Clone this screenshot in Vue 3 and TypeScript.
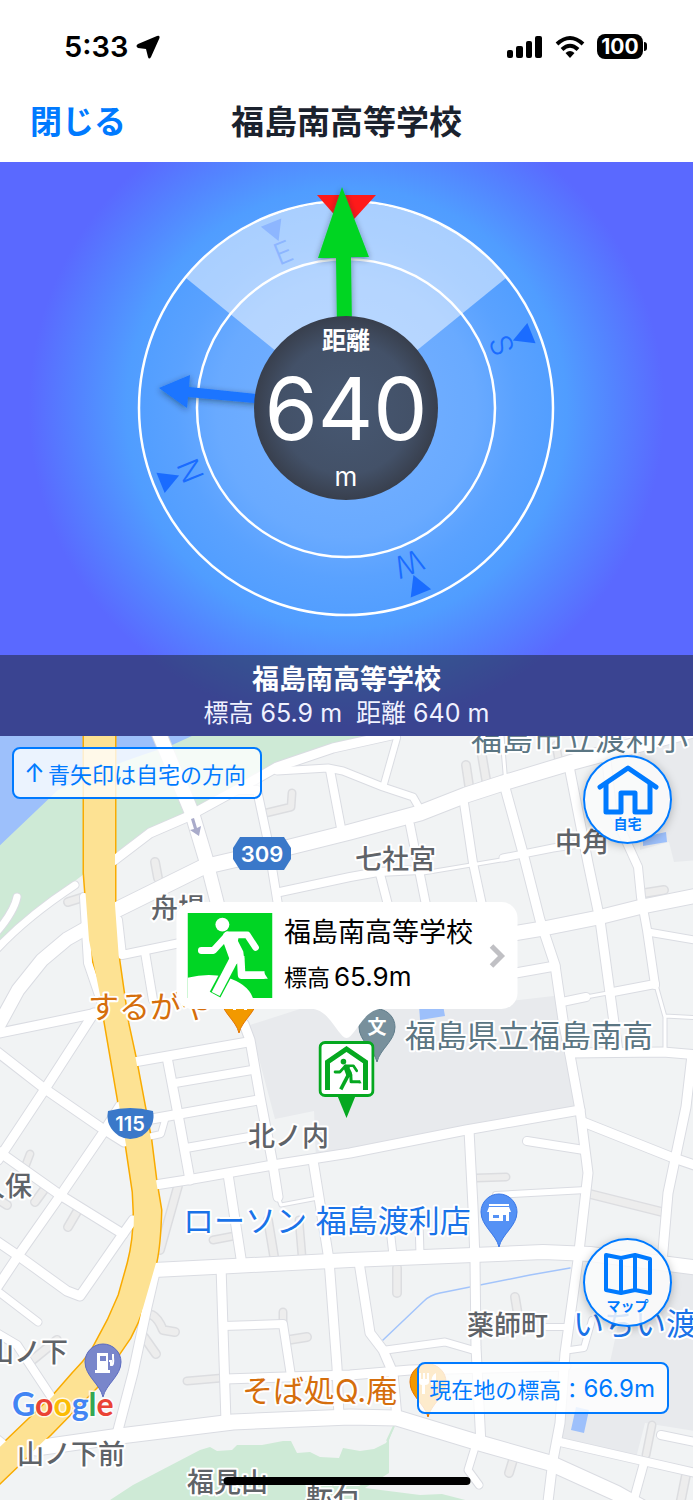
<script setup lang="ts">
interface Road { w: number; d: string }
interface Label { x: number; y: number; text: string; kind: 'town' | 'school' | 'food' | 'shop' }
interface Pin { x: number; y: number; fill: string; edge: string; icon: 'school' | 'shop' | 'fuel' | 'food' }

const compassPoints = [
  { letter: 'E', angle: -22 },
  { letter: 'S', angle: 68 },
  { letter: 'W', angle: 158 },
  { letter: 'N', angle: 248 },
]

const lanes: Road[] = [
  { w: 8, d: 'M155 862L158 878' },
  { w: 8, d: 'M68 902L84 897' },
  { w: 7, d: 'M266 813L291 807L292 793' },
  { w: 8, d: 'M466 765L470 792' },
  { w: 8, d: 'M481 750L487 785' },
  { w: 7, d: 'M556 745L559 762' },
  { w: 8, d: 'M645 893L664 890' },
  { w: 7, d: 'M30 1154L25 1167' },
  { w: 8, d: 'M46 1187L35 1202' },
  { w: 8, d: 'M-4 1198L7 1205' },
  { w: 8, d: 'M78 1210L68 1227' },
  { w: 8, d: 'M178 1186L160 1250' },
  { w: 7, d: 'M213 1240L234 1236' },
  { w: 8, d: 'M268 1220L274 1256' },
  { w: 7, d: 'M299 1220L302 1256' },
  { w: 7, d: 'M476 1178L506 1177' },
  { w: 8, d: 'M590 1194L662 1212' },
  { w: 8, d: 'M152 1315Q158 1318 163 1330L175 1332' },
  { w: 8, d: 'M144 1337L156 1354' },
  { w: 8, d: 'M57 1340L30 1362' },
  { w: 7, d: 'M283 1312L283 1324' },
  { w: 8, d: 'M288 1340L307 1337' },
  { w: 7, d: 'M187 1381L222 1378' },
  { w: 8, d: 'M397 1268L397 1293' },
  { w: 8, d: 'M515 1297L518 1315' },
  { w: 7, d: 'M652 1425L646 1455' },
  { w: 8, d: 'M513 1460L509 1473' },
  { w: 8, d: 'M686 1475L680 1505' },
]

const roads: Road[] = [
  { w: 3, d: 'M423 873L471 865L501 860' },
  { w: 3, d: 'M586 997L613 992' },
  { w: 3, d: 'M656 985L665 1017V1050M665 1016L700 1018' },
  { w: 3, d: 'M278 1197L281 1205L318 1198' },
  { w: 3, d: 'M502 736L506 785' },
  { w: 14, d: 'M155 724L192 813L207 863' },
  { w: 13, d: 'M207 863L217 902L225 940' },
  { w: 15, d: 'M112 912L203 867L290 847L350 832L420 813L466 795L503 783L573 762L700 728' },
  { w: 13, d: 'M-6 1034L18 990L42 960L67 939L90 926' },
  { w: 9, d: 'M112 862L150 833L187 817L240 788L277 767L333 748L396 734' },
  { w: 7, d: 'M277 771L328 768L343 771L383 787L413 797L421 811' },
  { w: 6, d: 'M397 738L384 784' },
  { w: 8, d: 'M330 770L341 828' },
  { w: 8, d: 'M238 790L257 790L267 837L278 905' },
  { w: 8, d: 'M280 892L350 877L378 872L420 870' },
  { w: 7, d: 'M503 858L553 848L586 843' },
  { w: 8, d: 'M410 825L426 905' },
  { w: 8, d: 'M380 874L388 905' },
  { w: 8, d: 'M464 803L473 863L482 905' },
  { w: 9, d: 'M504 784L523 853L540 920L555 965L563 1020L570 1055L580 1110L588 1173L578 1260L565 1353L560 1423L553 1460L547 1510' },
  { w: 9, d: 'M569 766L588 863L600 920L618 1052' },
  { w: 8, d: 'M606 756L612 810L638 867L641 897L647 930L655 985' },
  { w: 14, d: 'M510 934L546 928L596 918L640 907L700 895' },
  { w: 8, d: 'M118 920L122 955L180 943' },
  { w: 9, d: 'M510 974L555 966' },
  { w: 8, d: 'M562 1002L586 997M613 992L655 984' },
  { w: 7, d: 'M648 932L700 941' },
  { w: 9, d: 'M570 1053L663 1052L700 1055' },
  { w: 9, d: 'M692 1055L686 1107L668 1193L662 1262' },
  { w: 9, d: 'M583 1122L671 1157L700 1167' },
  { w: 9, d: 'M155 1185L187 1180L273 1165L350 1153L466 1130L580 1110' },
  { w: 8, d: 'M527 1141L584 1150' },
  { w: 6, d: 'M496 1195L586 1190' },
  { w: 9, d: 'M469 1130L473 1207L475 1260L476 1347L481 1445' },
  { w: 14, d: 'M154 1270L233 1266L350 1260L473 1255L543 1252L590 1254L700 1268' },
  { w: 9, d: 'M244 1024L250 1040L260 1097L273 1165L278 1197' },
  { w: 9, d: 'M134 1062L248 1042' },
  { w: 9, d: 'M167 1057L180 1125L190 1180' },
  { w: 8, d: 'M175 1083L252 1070' },
  { w: 9, d: 'M146 1120L258 1100' },
  { w: 8, d: 'M186 1148L266 1134' },
  { w: 6, d: 'M148 1137L161 1134L165 1120' },
  { w: 9, d: 'M228 1174L242 1265' },
  { w: 9, d: 'M313 1160L329 1260L337 1367L339 1418' },
  { w: 9, d: 'M221 1266L226 1422' },
  { w: 8, d: 'M223 1326L283 1324L291 1376' },
  { w: 9, d: 'M225 1379L350 1375L410 1370L566 1366' },
  { w: 15, d: 'M36 1448L120 1436L233 1422L350 1417L397 1418L476 1442L550 1463L616 1493L650 1512' },
  { w: 9, d: 'M156 1268L147 1307L133 1373L117 1434' },
  { w: 9, d: 'M-5 1050L45 1089L100 1127L124 1142' },
  { w: 9, d: 'M120 1106L103 1133L60 1196L20 1253L-6 1292' },
  { w: 9, d: 'M94 1013L45 1089L-2 1160' },
  { w: 9, d: 'M-5 1034L97 1013' },
  { w: 9, d: 'M-5 1149L60 1195L123 1234' },
  { w: 9, d: 'M133 1220L123 1234L80 1296L67 1291L20 1257L-5 1240' },
  { w: 7, d: 'M-5 1289L38 1322' },
  { w: 8, d: 'M-5 1332L17 1345L52 1398' },
  { w: 7, d: 'M-5 951Q25 918 75 885' },
  { w: 7, d: 'M-5 934Q14 912 17 897' },
  { w: 8, d: 'M84 897L88 963L104 1010' },
  { w: 8, d: 'M145 952L153 1000' },
  { w: 9, d: 'M359 1262L370 1333L383 1350L393 1373L397 1418' },
  { w: 7, d: 'M386 1350L445 1342L476 1351' },
  { w: 6, d: 'M570 1350L584 1348L592 1320M546 1327L570 1327' },
  { w: 8, d: 'M560 1442L643 1461L700 1474' },
  { w: 8, d: 'M644 1463L631 1510' },
  { w: 7, d: 'M476 1444L468 1470L479 1485' },
  { w: 8, d: 'M661 1435L700 1443' },
  { w: 7, d: 'M389 1220L393 1255M419 1220L420 1255' },
  { w: 9, d: 'M-5 1438L10 1450' },
]

const highway =
  'M84 724V873L89 940L101 1000L119 1105L126 1145L133 1192L134 1213Q134 1240 128 1263L119 1295L108 1320L92 1350Q84 1362 73 1373L52 1397L5 1442L-10 1456V1493L0 1483L50 1435L97 1387L117 1357L130 1338Q138 1323 143 1308L156 1263Q160 1245 161 1210L156 1180L151 1140L145 1108L136 1060L128 1023L119 960L115 905V724Z'

const labels: Label[] = [
  { x: 471, y: 750, text: '福島市立渡利小', kind: 'school' },
  { x: 405, y: 1047, text: '福島県立福島南高', kind: 'school' },
  { x: 355, y: 869, text: '七社宮', kind: 'town' },
  { x: 555, y: 852, text: '中角', kind: 'town' },
  { x: 151, y: 918, text: '舟場', kind: 'town' },
  { x: 248, y: 1146, text: '北ノ内', kind: 'town' },
  { x: -22, y: 1196, text: '久保', kind: 'town' },
  { x: -13, y: 1362, text: '山ノ下', kind: 'town' },
  { x: 17, y: 1464, text: '山ノ下前', kind: 'town' },
  { x: 187, y: 1492, text: '福見山', kind: 'town' },
  { x: 306, y: 1503, text: '転石', kind: 'town' },
  { x: 467, y: 1335, text: '薬師町', kind: 'town' },
  { x: 88, y: 1018, text: 'するがや', kind: 'food' },
  { x: 242, y: 1402, text: 'そば処Q.庵', kind: 'food' },
  { x: 183, y: 1232, text: 'ローソン 福島渡利店', kind: 'shop' },
  { x: 573, y: 1335, text: 'いちい渡', kind: 'shop' },
]

const pins: Pin[] = [
  { x: 239, y: 998, fill: '#f29900', edge: '#e37400', icon: 'food' },
  { x: 428, y: 1382, fill: '#f29900', edge: '#e37400', icon: 'food' },
  { x: 377, y: 1027, fill: '#78909c', edge: '#607d8b', icon: 'school' },
  { x: 499, y: 1212, fill: '#5491f5', edge: '#3b78e7', icon: 'shop' },
  { x: 103, y: 1362, fill: '#7986cb', edge: '#5c6bc0', icon: 'fuel' },
]

const google = [
  { c: 'G', color: '#4285f4' },
  { c: 'o', color: '#ea4335' },
  { c: 'o', color: '#fbbc04' },
  { c: 'g', color: '#4285f4' },
  { c: 'l', color: '#34a853' },
  { c: 'e', color: '#ea4335' },
]
</script>

<template>
  <div class="page">
    <svg class="defs" aria-hidden="true">
      <symbol id="runner" viewBox="0 0 256 256">
        <g fill="none" stroke="currentColor" stroke-linejoin="round">
          <path d="M42 113H78L120 67" stroke-width="21" stroke-linecap="round" />
          <path d="M120 66H180L205 104" stroke-width="20" stroke-linecap="round" />
          <path d="M160 130L163 187H232" stroke-width="23" />
          <path d="M142 135L85 244" stroke-width="27" />
        </g>
        <circle cx="105" cy="35" r="21" fill="currentColor" />
        <path d="M108 62L155 64L152 84L168 116L171 140L135 160L126 138L108 88Z" fill="currentColor" />
        <path d="M228 176L242 198H220Z" fill="currentColor" />
      </symbol>
    </svg>

    <header class="header">
      <div class="status">
        <div class="clock">
          <span>5:33</span>
          <svg width="24" height="24" viewBox="0 0 24 24"><path d="M21 1L2 9Q-1 11 2 13L10 14L12 22Q13 25 15 22L23.500 3Q24 0 21 1Z" /></svg>
        </div>
        <div class="signals">
          <svg width="36" height="24" viewBox="0 0 36 24">
            <rect x="0" y="15" width="6" height="8" rx="2" /><rect x="9" y="11" width="7" height="12" rx="2" />
            <rect x="19" y="6" width="6" height="17" rx="2" /><rect x="28" y="1" width="7" height="22" rx="2" />
          </svg>
          <svg width="30" height="24" viewBox="0 0 30 24">
            <g fill="none" stroke="#000" stroke-width="4"><path d="M2 9Q15 -3 28 9" /><path d="M7 14.500Q15 7 23 14.500" /></g>
            <path d="M10.500 18Q15 14 19.500 18L15 23Z" />
          </svg>
          <div class="battery">100</div>
        </div>
      </div>
      <div class="nav">
        <button class="close" type="button">閉じる</button>
        <h1>福島南高等学校</h1>
      </div>
    </header>

    <section class="compass">
      <svg class="dial" viewBox="-346 -246 693 493" role="img" aria-label="コンパス">
        <defs>
          <radialGradient id="hub"><stop offset="0" stop-color="#475872" /><stop offset=".72" stop-color="#435168" /><stop offset="1" stop-color="#383f4d" /></radialGradient>
          <filter id="soft" x="-20%" y="-20%" width="140%" height="150%"><feDropShadow dx="0" dy="2" stdDeviation="3" flood-color="#123" flood-opacity=".45" /></filter>
        </defs>
        <g v-for="p in compassPoints" :key="p.letter" :transform="`rotate(${p.angle})`" class="point">
          <path d="M-11 -200H11L0 -180Z" />
          <text y="-157" text-anchor="middle">{{ p.letter }}</text>
        </g>
        <path d="M0 0L-160 -130A207 207 0 0 1 160 -130Z" fill="#fff" fill-opacity=".5" />
        <g fill="none" stroke="#fff" stroke-width="2.500"><circle r="207" /><circle r="149" /></g>
        <path d="M-29 -213H30L0 -180Z" fill="#ff1a1a" />
        <path filter="url(#soft)" d="M-187 -20L-156 -33L-157 -21L-80 -13V-4L-158 -11L-159 0Z" fill="#1a75ff" />
        <path filter="url(#soft)" d="M-4 -221L23 -151L5 -151L6 -80H-9L-10 -150L-28 -150Z" fill="#00d524" />
        <circle r="92" fill="url(#hub)" />
        <g fill="#fff" text-anchor="middle">
          <text y="-59" class="hub-title">距離</text>
          <text y="32" class="hub-value">640</text>
          <text y="78" class="hub-unit">m</text>
        </g>
      </svg>
      <div class="caption">
        <h2>福島南高等学校</h2>
        <p>標高 65.9 m&nbsp; 距離 640 m</p>
      </div>
    </section>

    <main class="map">
      <svg class="tiles" viewBox="0 736 693 764" preserveAspectRatio="xMidYMid slice" role="img" aria-label="地図">
        <rect x="-700" y="0" width="2100" height="2300" fill="#f1f3f4" />
        <path d="M-5 736H396L333 748L277 767L240 788L150 833L115 860L84 874L50 900L-5 947Z" fill="#ceead6" />
        <path d="M-5 730H205L170 746Q100 768 58 790L-5 850Z" fill="#9dc0fb" />
        <path d="M107 1502L133 1485L200 1450L210 1447L217 1451L232 1450L237 1445L262 1445L283 1441L291 1441L297 1453L310 1452L320 1457L339 1458L343 1448L360 1451L374 1449L386 1443L394 1427L389 1440V1473L365 1488L420 1495L442 1494L473 1502Z" fill="#ceead6" />
        <path d="M394 1426L387 1441" stroke="#ceead6" stroke-width="2" />
        <g fill="#e8eaed">
          <path d="M250 1025L300 1009H440L562 995L580 1110L343 1153L316 1160L314 1111L275 1119Z" />
          <path d="M640 740L700 730V860L674 862L669 842L640 850Z" />
          <path d="M622 1307L640 1266L700 1270V1432L645 1423L636 1458L562 1440L567 1370L610 1362Z" />
        </g>
        <g fill="#9dc0fb">
          <path d="M643 837L666 832L667 842L643 846Z" /><path d="M419 1005H443L445 1016L420 1020Z" /><path d="M576 1407L589 1410L584 1433L571 1430Z" />
        </g>
        <g fill="none" stroke-linejoin="round" stroke-linecap="round">
          <path v-for="(r, i) in lanes" :key="'lc' + i" :d="r.d" :stroke-width="r.w + 2" stroke="#dcdde0" />
          <path v-for="(r, i) in lanes" :key="'lf' + i" :d="r.d" :stroke-width="r.w - 1" stroke="#ededed" />
          <path d="M383 1340L424 1301Q430 1295 440 1293L530 1275L570 1268" stroke="#a3c4fb" stroke-width="1.500" />
          <path v-for="(r, i) in roads" :key="'rc' + i" :d="r.d" :stroke-width="r.w + 2" stroke="#dadce2" />
          <path :d="highway" stroke="#f9ab00" stroke-width="3" />
          <path v-for="(r, i) in roads" :key="'rf' + i" :d="r.d" :stroke-width="r.w" stroke="#fff" />
        </g>
        <path :d="highway" fill="#fde293" />
        <path d="M191 819L194 829L190 830L199 836L201 826L197 828L194 818Z" fill="#a9abca" />

        <path d="M240 837H284L291 848V859L284 870H240L233 859V848Z" fill="#3a78c9" />
        <text x="262" y="862" class="shield">309</text>
        <path d="M108 1111Q130 1105 153 1111Q156 1126 142 1136Q130 1142 119 1136Q105 1126 108 1111Z" fill="#3a78c9" />
        <text x="130" y="1131" class="shield small">115</text>

        <g v-for="(p, i) in pins" :key="'p' + i" :transform="`translate(${p.x} ${p.y})`">
          <path d="M0 35C-3 22 -18 14 -18 0A18 18 0 1 1 18 0C18 14 3 22 0 35Z" :fill="p.fill" :stroke="p.edge" />
          <text v-if="p.icon === 'school'" y="7" class="pin-text">文</text>
          <g v-else-if="p.icon === 'shop'" fill="#fff">
            <path d="M-10 -8H10V-6H-10ZM-10 -5H10L12 0H-12Z" /><path fill-rule="evenodd" d="M-10 0H10V9H-10ZM-6 3V6H0V3ZM4 3V9H7V3Z" />
          </g>
          <g v-else-if="p.icon === 'fuel'" fill="#fff">
            <path fill-rule="evenodd" d="M-6 -9H5V8H7V11H-8V8H-6ZM-3 -6V-1H3V-6Z" />
            <path d="M6 -1H8V3Q11 4 10 -5V-8M5 -1" fill="none" stroke="#fff" stroke-width="2" />
          </g>
          <g v-else fill="#fff">
            <path d="M-9 -9H-7V-3H-5V-9H-3V-3H-1V-9H1V0Q1 3 -3 3V12H-6V3Q-9 3 -9 0ZM8 -9V12H5V3H3Q3 -7 8 -9Z" />
          </g>
        </g>

        <text v-for="(l, i) in labels" :key="'t' + i" :x="l.x" :y="l.y" :class="['label', l.kind]">{{ l.text }}</text>
        <text x="12" y="1416" class="google"><tspan v-for="(g, i) in google" :key="'g' + i" :fill="g.color">{{ g.c }}</tspan></text>
      </svg>

      <div class="tag hint"><span class="up">↑</span>青矢印は自宅の方向</div>
      <div class="tag altitude">現在地の標高：<span class="digits">66.9m</span></div>

      <button class="round home" type="button">
        <svg width="62" height="52" viewBox="0 0 62 52" fill="none" stroke="#007aff" stroke-width="5" stroke-linecap="round" stroke-linejoin="round">
          <path d="M3 23L31 4L59 23" /><path d="M9 20V48H24V29H38V48H53V20" />
        </svg>
        <span>自宅</span>
      </button>
      <button class="round sheet" type="button">
        <svg width="48" height="44" viewBox="0 0 48 44" fill="none" stroke="#007aff" stroke-width="4" stroke-linejoin="round">
          <path d="M2 3L17 6L31 3L46 7V41L31 38L17 41L2 38ZM17 6V41M31 3V38" />
        </svg>
        <span>マップ</span>
      </button>

      <div class="place">
        <button class="callout" type="button">
          <svg class="exit" viewBox="0 0 256 256">
            <rect width="256" height="256" fill="#00d524" />
            <path d="M0 195Q60 180 112 192Q182 212 197 256H0Z" fill="#fff" />
            <path d="M142 135L83 246" stroke="#00d524" stroke-width="36" />
            <use href="#runner" width="256" height="256" color="#fff" />
          </svg>
          <span class="place-text">
            <span class="place-name">福島南高等学校</span>
            <span class="place-alt">標高<b>65.9m</b></span>
          </span>
          <svg class="chevron" width="18" height="24" viewBox="0 0 18 24"><path d="M3 2L13 12L3 22" fill="none" stroke="#c0c0c4" stroke-width="5" /></svg>
        </button>
        <svg class="tail" width="66" height="30" viewBox="0 0 66 30"><path d="M0 0H66C52 2 46 18 37 27Q33 31 29 27C20 18 14 2 0 0Z" fill="#fff" /></svg>
        <svg class="marker" width="56" height="77" viewBox="0 0 56 77">
          <path d="M19 55H37L28 77Z" fill="#05a820" />
          <rect x="1.500" y="1.500" width="53" height="53" rx="5" fill="#fff" stroke="#05a820" stroke-width="3" />
          <path d="M9 49V21L28 8L47 21V49" fill="none" stroke="#05a820" stroke-width="5" />
          <use href="#runner" x="11" y="16" width="34" height="34" color="#05a820" />
        </svg>
      </div>
      <div class="home-bar"></div>
    </main>
  </div>
</template>

<style>
body { margin: 0; }
</style>

<style scoped>
.page {
  display: flex;
  flex-direction: column;
  min-height: 100vh;
  font-family: Inter, "Noto Sans CJK JP", sans-serif;
  background: #fff;
}
.page * { box-sizing: border-box; }
.defs { position: absolute; width: 0; height: 0; }
button { font: inherit; border: 0; padding: 0; cursor: pointer; }

.header { background: #fff; }
.status {
  display: flex;
  justify-content: space-between;
  align-items: center;
  height: 82px;
  padding: 11px 50px 0 64px;
}
.clock { display: flex; align-items: center; gap: 8px; font-size: 29px; font-weight: 600; }
.signals { display: flex; align-items: center; gap: 12px; }
.battery {
  position: relative;
  width: 46px;
  height: 25px;
  border-radius: 8px;
  background: #000;
  color: #fff;
  font-size: 21px;
  font-weight: 700;
  line-height: 25px;
  text-align: center;
}
.battery::after {
  content: "";
  position: absolute;
  right: -4px;
  top: 8px;
  width: 3px;
  height: 9px;
  border-radius: 0 3px 3px 0;
  background: #000;
}
.nav {
  display: grid;
  grid-template-columns: 1fr auto 1fr;
  align-items: center;
  height: 80px;
  padding: 0 30px;
}
.close { justify-self: start; background: none; color: #007aff; font-size: 32px; font-weight: 600; line-height: 48px; }
h1 { margin: 0; color: #1b222e; font-size: 33px; font-weight: 700; line-height: 48px; }

.compass {
  background: radial-gradient(circle at 50% 246px, #78b2ff 0, #69aaff 130px, #5aa2ff 170px, #509dff 220px, #5385ff 265px, #5a69ff 318px);
}
.dial { display: block; width: 100%; height: 493px; }
.point { fill: #1a6cff; }
.point text { font-size: 30px; font-weight: 300; }
.hub-title { font-size: 24px; font-weight: 700; }
.hub-value { font-size: 86px; }
.hub-unit { font-size: 26px; }
.caption {
  height: 81px;
  padding-top: 8px;
  background: rgba(26, 31, 35, .5);
  color: #fff;
  text-align: center;
}
h2 { margin: 0; font-size: 27px; font-weight: 700; line-height: 34px; }
.caption p { margin: 0; font-size: 25px; line-height: 32px; color: #f0f1ff; }

.map { position: relative; flex: 1; min-height: 764px; overflow: hidden; }
.tiles { position: absolute; inset: 0; width: 100%; height: 100%; }
.label { paint-order: stroke; stroke: #fff; stroke-width: 4px; stroke-linejoin: round; font-size: 31px; }
.town { font-size: 27px; font-weight: 500; fill: #5f6368; }
.school { fill: #5b7683; }
.food { fill: #d56e0c; }
.shop { fill: #1a73e8; }
.shield { fill: #fff; font-size: 22px; font-weight: 600; text-anchor: middle; }
.shield.small { font-size: 20px; }
.pin-text { fill: #fff; font-size: 19px; font-weight: 700; text-anchor: middle; }
.google { font-family: Lato, sans-serif; font-size: 32px; font-weight: 700; paint-order: stroke; stroke: #fff; stroke-width: 3px; stroke-opacity: .8; }

.tag {
  position: absolute;
  display: flex;
  align-items: center;
  height: 52px;
  padding: 0 12px;
  border: 2px solid #007aff;
  border-radius: 8px;
  background: rgba(255, 255, 255, .8);
  color: #007aff;
  font-size: 22px;
  white-space: nowrap;
}
.hint { left: 12px; top: 11px; padding: 0 14px 0 10px; }
.up { width: 24px; font-size: 25px; }
.altitude { right: 24px; bottom: 86px; padding: 0 12px 0 10px; }
.digits { font-size: 24px; }

.round {
  position: absolute;
  display: flex;
  flex-direction: column;
  align-items: center;
  width: 89px;
  height: 89px;
  border: 2px solid #007aff;
  border-radius: 50%;
  background: rgba(250, 250, 250, .85);
  box-shadow: 0 2px 10px rgba(0, 0, 0, .25);
  color: #007aff;
  font-size: 14px;
  font-weight: 700;
  line-height: 16px;
}
.home { right: 21px; top: 19px; padding-top: 7px; }
.sheet { right: 21px; bottom: 173px; padding-top: 12px; gap: 2px; }

.place {
  position: absolute;
  left: 50%;
  top: 50%;
  display: flex;
  flex-direction: column;
  align-items: center;
  transform: translate(-50%, -100%);
}
.callout {
  display: flex;
  gap: 12px;
  align-items: center;
  width: 341px;
  height: 107px;
  padding: 11px;
  border-radius: 16px;
  background: #fff;
  color: #000;
  text-align: left;
}
.exit { flex: none; width: 85px; height: 85px; }
.place-text { display: flex; flex-direction: column; flex: 1; gap: 8px; white-space: nowrap; }
.place-name { font-size: 27px; line-height: 36px; }
.place-alt { font-size: 23px; line-height: 36px; }
.place-alt b { margin-left: 4px; font-size: 26px; font-weight: 400; }
.chevron { flex: none; }
.tail { display: block; margin-bottom: 2px; }
.marker { display: block; }
.home-bar {
  position: absolute;
  left: 50%;
  bottom: 15px;
  width: 247px;
  height: 8px;
  border-radius: 4px;
  background: #000;
  transform: translateX(-50%);
}
</style>
